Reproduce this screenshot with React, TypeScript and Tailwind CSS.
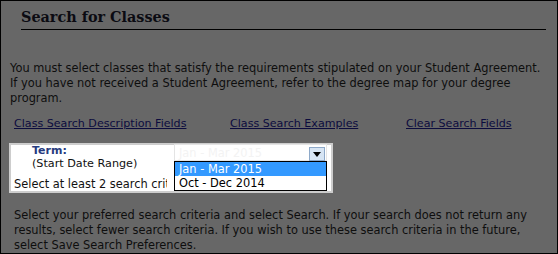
export default function App() {
  return (
    <div className="w-[558px] h-[254px] border border-black bg-[#676767] overflow-hidden text-[#0e0e0e] font-['DejaVu_Sans',sans-serif]">
      <div className="ml-[20px] mr-[11px] pt-[7px] pb-[3px] border-b border-black">
        <h2 className="text-[14.4px] leading-[18px] font-bold text-[#0b0b12] font-['DejaVu_Serif',serif]">
          Search for Classes
        </h2>
      </div>

      <p className="mt-[31px] pl-[9px] text-[11.4px] leading-[15px] whitespace-nowrap">
        You must select classes that satisfy the requirements stipulated on your Student Agreement.
        <br />
        If you have not received a Student Agreement, refer to the degree map for your degree
        <br />
        program.
      </p>

      <div className="mt-[10px] pl-[13px] grid grid-cols-[216px_176px_auto] text-[11.1px] leading-[15px] text-[#0c0c3e] whitespace-nowrap">
        <a className="underline">Class Search Description Fields</a>
        <a className="underline">Class Search Examples</a>
        <a className="underline">Clear Search Fields</a>
      </div>

      <div className="relative mt-[12px] ml-[8px] w-[324px] h-[50px] border-2 border-[#cdcdcd] bg-white flex">
        <div className="w-[163px] flex flex-col">
          <div className="pl-[21px] text-[11px] leading-[11px] font-bold text-[#263a7e]">Term:</div>
          <div className="mt-[1px] pl-[21px] text-[11.2px] leading-[13px] text-[#111]">(Start Date Range)</div>
          <div className="mt-[7px] pl-[3px] w-[156px] overflow-hidden whitespace-nowrap text-[11.4px] leading-[15px] text-[#111]">
            Select at least 2 search criteria.
          </div>
        </div>
        <div className="w-[153px] h-[17px] mt-[-1px] border border-[#e4e4e4] bg-white flex items-center justify-between pl-[4px]">
          <span className="text-[11.4px] leading-[14px] text-[#f3f3f3] whitespace-nowrap">Jan - Mar 2015</span>
          <div className="w-[16px] h-[14px] mt-[3px] mr-[1px] border border-[#8ea9c9] bg-[#d7e5f4] flex items-center justify-center">
            <svg width="8" height="5" viewBox="0 0 8 5">
              <path d="M0 0 H8 L4 5 Z" fill="#000" />
            </svg>
          </div>
        </div>

        <div className="absolute left-[163px] top-[16px] w-[153px] border border-black bg-white text-[11.4px] leading-[14px] whitespace-nowrap">
          <div className="h-[14px] bg-[#3399ff] text-white pl-[4px]">Jan - Mar 2015</div>
          <div className="h-[14px] text-black pl-[4px]">Oct - Dec 2014</div>
        </div>
      </div>

      <p className="mt-[15px] pl-[13px] text-[11.4px] leading-[15px] whitespace-nowrap">
        Select your preferred search criteria and select Search. If your search does not return any
        <br />
        results, select fewer search criteria. If you wish to use these search criteria in the future,
        <br />
        select Save Search Preferences.
      </p>
    </div>
  );
}
